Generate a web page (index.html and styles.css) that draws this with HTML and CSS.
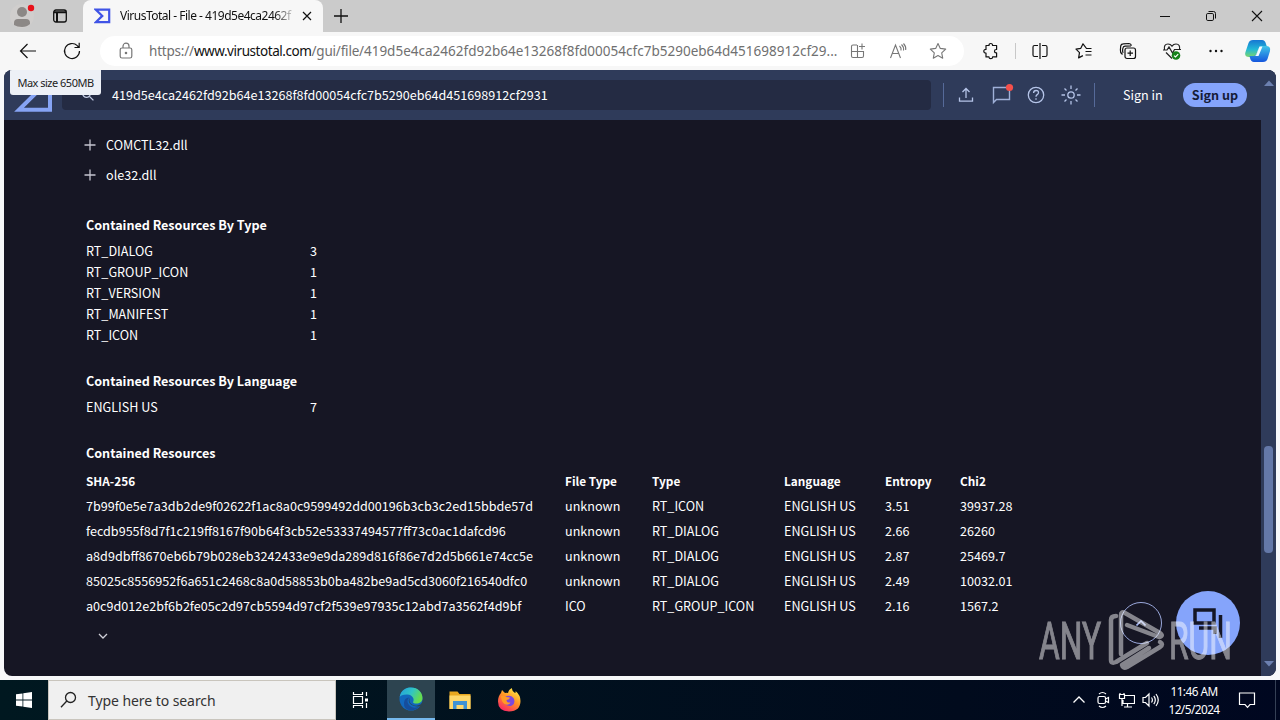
FILE: index.html
```html
<!DOCTYPE html>
<html lang="en">
<head>
<meta charset="utf-8">
<title>VirusTotal - File</title>
<link rel="stylesheet" href="styles.css">
</head>
<body>
<div class="desktop">
  <header class="tabstrip">
    <div class="strip-left">
      <svg class="profile" width="26" height="26" viewBox="0 0 26 26"><circle cx="13" cy="13" r="12" fill="#d0cecd"/><circle cx="13" cy="9" r="5" fill="#8c8886"/><path d="M5 22v-2q0-4 4-4h8q4 0 4 4v1q-3 3-8 3t-8-2z" fill="#8c8886"/><circle cx="22" cy="5" r="3.2" fill="#e8111a"/></svg>
      <svg class="panel-icon" width="16" height="16" viewBox="0 0 16 16" fill="none" stroke="#111" stroke-width="1.3"><rect x="1.7" y="2" width="12.6" height="12" rx="2.2"/><path d="M2 4.2h12M5 5v9" stroke-width="2"/></svg>
    </div>
    <div class="tab">
      <svg width="17" height="16" viewBox="0 0 17 16" fill="none" stroke="#4054e6" stroke-width="2.2"><path d="M1.8 1.6H15.2V14.2H1.8L8.3 7.9z"/></svg>
      <span class="tab-title">VirusTotal - File - 419d5e4ca2462f</span>
      <svg class="tab-close" width="12" height="12" viewBox="0 0 12 12" stroke="#111" stroke-width="1.2"><path d="M2 2l8 8M10 2l-8 8"/></svg>
    </div>
    <svg class="newtab" width="16" height="16" viewBox="0 0 16 16" stroke="#111" stroke-width="1.3"><path d="M1 8h14M8 1v14"/></svg>
    <div class="window-buttons">
      <svg width="12" height="12" viewBox="0 0 12 12" stroke="#111" fill="none"><path d="M1 6.5h10"/></svg>
      <svg width="12" height="12" viewBox="0 0 12 12" stroke="#111" fill="none"><rect x="1.5" y="3.5" width="7" height="7" rx="1.3"/><path d="M3.5 1.5h5q2 0 2 2v5"/></svg>
      <svg width="12" height="12" viewBox="0 0 12 12" stroke="#111" fill="none" stroke-width="1.1"><path d="M1 1l10 10M11 1L1 11"/></svg>
    </div>
  </header>

  <nav class="toolbar">
    <svg class="back" width="20" height="20" viewBox="0 0 20 20" fill="none" stroke="#111" stroke-width="1.2"><path d="M18 10H2.5M9.5 3L2.500 10l7 7"/></svg>
    <svg class="reload" width="20" height="20" viewBox="0 0 20 20" fill="none" stroke="#111" stroke-width="1.2"><path d="M17.500 10a7.500 7.500 0 1 1-2.200-5.300L17 6.300M17.200 1.800v4.700h-4.700"/></svg>
    <div class="address">
      <svg width="18" height="18" viewBox="0 0 18 18" fill="none" stroke="#777" stroke-width="1.2"><rect x="3.2" y="6" width="11.6" height="10" rx="1.8"/><path d="M6 6V4.200a3 3 0 0 1 6 0V6"/><circle cx="9" cy="11" r=".7" fill="#666"/></svg>
      <span class="url">https://<b>www.virustotal.com</b>/gui/file/<span class="url-hash">419d5e4ca2462fd92b64e13268f8fd00054cfc7b5290eb64d451698912cf29...</span></span>
      <div class="address-icons">
        <svg width="18" height="18" viewBox="0 0 18 18" fill="none" stroke="#777" stroke-width="1.1"><path d="M8 3H4q-1.500 0-1.500 1.500V14q0 1.500 1.500 1.500h9q1.500 0 1.500-1.500V9.500h-12M8.500 3v12.500M13 1.500v6M10 4.500h6"/></svg>
        <svg width="18" height="18" viewBox="0 0 18 18" fill="none" stroke="#777" stroke-width="1.1"><path d="M1.500 16L6.500 3l5 13M3.500 11.500h6M10.500 4q2 1.800 1.500 4.500M12.500 2.500q2.600 2.500 2 6M14.500 1.500q2.800 3 2.200 6.500"/></svg>
        <svg width="18" height="18" viewBox="0 0 18 18" fill="none" stroke="#777" stroke-width="1.1" stroke-linejoin="round"><path d="M9 1.500l2.300 4.900 5.400.7-4 3.700 1 5.400L9 13.600l-4.700 2.600 1-5.400-4-3.700 5.400-.7z"/></svg>
      </div>
    </div>
    <svg class="extensions" width="18" height="18" viewBox="0 0 18 18" fill="none" stroke="#111" stroke-width="1.2" stroke-linejoin="round"><path d="M4 3.500h3q0-2 1.800-2t1.800 2h4v4h-.5q-1.600 0-1.600 1.700t1.600 1.700h.5v4h-4q0 1.800-1.800 1.800T7 14.900H4V11Q1.800 11 1.800 9.200T4 7.400z"/></svg>
    <i class="toolbar-sep"></i>
    <div class="tools">
      <svg width="18" height="18" viewBox="0 0 18 18" fill="none" stroke="#111" stroke-width="1.2"><path d="M7 3.500H3.500q-1.500 0-1.500 1.500v8q0 1.500 1.500 1.500H7M11 3.500h3.500q1.500 0 1.500 1.500v8q0 1.500-1.500 1.500H11M9 1v16"/></svg>
      <svg width="18" height="18" viewBox="0 0 18 18" fill="none" stroke="#111" stroke-width="1.200" stroke-linejoin="round"><path d="M16.500 6.500h-5L8 1.800 5.800 6.300l-4.800.8 3.500 3.600-.9 5.200 4.300-2.300M10.500 9.500h6M10.500 13h6"/></svg>
      <svg width="18" height="18" viewBox="0 0 18 18" fill="none" stroke="#111" stroke-width="1.200"><rect x="6" y="6" width="10.500" height="10.500" rx="2"/><path d="M11.200 8.500v5.500M8.500 11.200H14M3.500 12.500Q1 10.500 1.400 8l.3-3.800Q2 2 4.200 1.900L10 1.500q2 0 2.500 2.200M4.200 10.800Q3.500 10 3.600 8l.2-1.500q.3-2.200 2.200-2.300l6-.4"/></svg>
      <svg width="18" height="18" viewBox="0 0 18 18" fill="none" stroke="#222" stroke-width="1.200"><path d="M1.500 8Q.500 2 5 2q2.500 0 4 2.200Q10.500 2 13 2q4.500 0 3.500 6M3 10.500l6 6M0 8h4l2-3 3.500 6 2-3.500H18"/><circle cx="13" cy="13.500" r="4.300" fill="#16821b" stroke="none"/><path d="M11 13.600l1.500 1.400 2.700-2.800" stroke="#fff"/></svg>
      <svg width="18" height="18" viewBox="0 0 18 18" fill="#111"><circle cx="3.500" cy="9" r="1.200"/><circle cx="9" cy="9" r="1.200"/><circle cx="14.500" cy="9" r="1.200"/></svg>
    </div>
    <svg class="copilot" width="26" height="24" viewBox="0 0 26 24"><defs><linearGradient id="cpa" x1="0" y1="0" x2="0" y2="1"><stop offset="0" stop-color="#1676d3"/><stop offset=".55" stop-color="#22b8d6"/><stop offset="1" stop-color="#7bd66c"/></linearGradient><linearGradient id="cpb" x1="0" y1="0" x2="0" y2="1"><stop offset="0" stop-color="#40c5e8"/><stop offset="1" stop-color="#1556dd"/></linearGradient></defs><path d="M8 1h9q3 0 4 4l1 3h-6q-2 0-3 3l-1.500 4Q10.500 18 8 18H4q-5 0-3.500-5L3.500 4Q4.500 1 8 1z" fill="url(#cpa)"/><path d="M18 23H9q-3 0-4-4l-.5-2H9q2 0 3-3l1.500-4Q14.500 7 17 7h4q5 0 4 5l-2.500 8q-1 3-4.500 3z" fill="url(#cpb)"/><path d="M14.500 7.500h3L13.500 17H10q1.300-.7 2-3z" fill="#f5fbff"/></svg>
  </nav>

  <main class="viewport">
    <div class="vt-header">
      <svg class="vt-logo" width="38" height="34" viewBox="0 0 38 34" fill="none" stroke="#86a4f5" stroke-width="4"><path d="M5 2h31v29.800H5L20 17z"/></svg>
      <div class="vt-search">
        <svg width="14" height="14" viewBox="0 0 14 14" fill="none" stroke="#c2cce4" stroke-width="1.300"><circle cx="5.500" cy="5.500" r="3.800"/><path d="M8.400 8.400l4 4"/></svg>
        <span>419d5e4ca2462fd92b64e13268f8fd00054cfc7b5290eb64d451698912cf2931</span>
      </div>
      <i class="vt-sep"></i>
      <div class="vt-icons">
        <svg width="20" height="20" viewBox="0 0 20 20" fill="none" stroke="#b5c4e8" stroke-width="1.300"><path d="M10 13V3.500M6.500 7L10 3.500 13.500 7M3.500 12.500v3.700h13v-3.700"/></svg>
        <svg width="20" height="20" viewBox="0 0 20 20" fill="none" stroke="#9fb0d8" stroke-width="1.400" overflow="visible"><path d="M2.500 17.500v-15h16v12h-13z"/><circle cx="18.500" cy="2.500" r="3.600" fill="#f5504b" stroke="none"/></svg>
        <svg width="20" height="20" viewBox="0 0 20 20" fill="none" stroke="#b5c4e8" stroke-width="1.300"><circle cx="10" cy="10" r="7.700"/><path d="M7.600 8q0-2.500 2.500-2.500T12.500 7.700q0 1-1.300 1.900T10 11.700M10 13.300v1.500"/></svg>
        <svg width="20" height="20" viewBox="0 0 20 20" fill="none" stroke="#b5c4e8" stroke-width="1.300"><circle cx="10" cy="10" r="3.200"/><path d="M10 .5V4M10 16v3.500M.5 10H4M16 10h3.500M3.500 3.500l2 2M14.500 14.500l2 2M3.500 16.500l2-2M14.500 5.500l2-2"/></svg>
      </div>
      <i class="vt-sep second"></i>
      <span class="signin">Sign in</span>
      <span class="signup">Sign up</span>
    </div>
    <div class="page-row">
      <div class="content">
        <div class="imports">
          <div class="import"><svg width="12" height="12" viewBox="0 0 12 12" stroke="#c5c5d0" stroke-width="1.300"><path d="M.500 6h11M6 .500v11"/></svg><span>COMCTL32.dll</span></div>
          <div class="import"><svg width="12" height="12" viewBox="0 0 12 12" stroke="#c5c5d0" stroke-width="1.300"><path d="M.500 6h11M6 .500v11"/></svg><span>ole32.dll</span></div>
        </div>
        <h2>Contained Resources By Type</h2>
        <dl class="counts">
          <dt>RT_DIALOG</dt><dd>3</dd>
          <dt>RT_GROUP_ICON</dt><dd>1</dd>
          <dt>RT_VERSION</dt><dd>1</dd>
          <dt>RT_MANIFEST</dt><dd>1</dd>
          <dt>RT_ICON</dt><dd>1</dd>
        </dl>
        <h2>Contained Resources By Language</h2>
        <dl class="counts"><dt>ENGLISH US</dt><dd>7</dd></dl>
        <h2>Contained Resources</h2>
        <div class="resources">
          <b>SHA-256</b><b>File Type</b><b>Type</b><b>Language</b><b>Entropy</b><b>Chi2</b>
          <span>7b99f0e5e7a3db2de9f02622f1ac8a0c9599492dd00196b3cb3c2ed15bbde57d</span><span>unknown</span><span>RT_ICON</span><span>ENGLISH US</span><span>3.51</span><span>39937.28</span>
          <span>fecdb955f8d7f1c219ff8167f90b64f3cb52e53337494577ff73c0ac1dafcd96</span><span>unknown</span><span>RT_DIALOG</span><span>ENGLISH US</span><span>2.66</span><span>26260</span>
          <span>a8d9dbff8670eb6b79b028eb3242433e9e9da289d816f86e7d2d5b661e74cc5e</span><span>unknown</span><span>RT_DIALOG</span><span>ENGLISH US</span><span>2.87</span><span>25469.7</span>
          <span>85025c8556952f6a651c2468c8a0d58853b0ba482be9ad5cd3060f216540dfc0</span><span>unknown</span><span>RT_DIALOG</span><span>ENGLISH US</span><span>2.49</span><span>10032.01</span>
          <span>a0c9d012e2bf6b2fe05c2d97cb5594d97cf2f539e97935c12abd7a3562f4d9bf</span><span>ICO</span><span>RT_GROUP_ICON</span><span>ENGLISH US</span><span>2.16</span><span>1567.2</span>
        </div>
        <svg class="more" width="10" height="8" viewBox="0 0 10 8" fill="none" stroke="#d0d0d8" stroke-width="1.300"><path d="M1 2l4 4 4-4"/></svg>
      </div>
    </div>
    <div class="scrollbar">
      <svg width="10" height="6" viewBox="0 0 10 6" fill="#6c80b0"><path d="M0 6l5-5.500L10 6z"/></svg>
      <i class="thumb"></i>
      <svg width="10" height="6" viewBox="0 0 10 6" fill="#6c80b0"><path d="M0 0l5 5.500L10 0z"/></svg>
    </div>
    <div class="tooltip">Max size 650MB</div>
    <div class="to-top"><svg width="10" height="6" viewBox="0 0 10 6" fill="none" stroke="#a9baf5" stroke-width="1.600"><path d="M.500 5.500L5 1l4.500 4.500"/></svg></div>
    <div class="chat"><svg width="32" height="30" viewBox="0 0 32 30" fill="none" stroke="#141626" stroke-width="3.500"><path d="M3 2h19v13H3zM28.500 7v23M7 20h16v6"/></svg></div>
    <svg class="watermark" width="200" height="64" viewBox="0 0 200 64">
      <g fill="#fff" stroke="#fff" stroke-width="1.1" font-family="Roboto, sans-serif" font-size="52.500"><text x="0" y="50.500" textLength="62" lengthAdjust="spacingAndGlyphs">ANY</text><text x="130" y="50.500" textLength="63" lengthAdjust="spacingAndGlyphs">RUN</text></g>
      <g fill="none" stroke="#fff" stroke-width="4.500" stroke-linejoin="round" stroke-linecap="round"><path d="M77 8q-5 0-5 4v40q0 4 5 2l31-19M82 46V7q0-4 4-2l35 20q4 3-1 4L88 17M121 34q4 2 0 5L88 59q-4 2-5-2l27-17"/></g>
    </svg>
  </main>

  <footer class="taskbar">
    <div class="start"><svg width="16" height="16" viewBox="0 0 16 16" fill="#fff"><path d="M0 2.300L6.500 1.400v6.200H0zM7.300 1.300L16 0v7.600H7.300zM0 8.400h6.500v6.200L0 13.700zM7.300 8.400H16V16l-8.700-1.300z"/></svg></div>
    <div class="search"><svg width="18" height="18" viewBox="0 0 18 18" fill="none" stroke="#222" stroke-width="1.300"><circle cx="10.500" cy="6.500" r="5"/><path d="M6.800 10L1 16.200"/></svg><span>Type here to search</span></div>
    <div class="task"><svg width="18" height="18" viewBox="0 0 18 18" fill="none" stroke="#fff" stroke-width="1.200"><path d="M2.500 1v2.500h9V1M2.500 17v-2.500h9V17M2.500 5.500h9v7h-9zM15.500 1v4M15.500 12v5"/><path d="M14 7.500h3v3h-3z" fill="#fff" stroke="none"/></svg></div>
    <div class="task active"><svg width="24" height="24" viewBox="0 0 24 24"><defs><linearGradient id="ea" x1="0" x2="1" y1="0" y2=".4"><stop offset="0" stop-color="#249fdd"/><stop offset=".55" stop-color="#30c4c5"/><stop offset="1" stop-color="#66dc4e"/></linearGradient></defs><circle cx="12" cy="12" r="11.500" fill="#1268bd"/><path d="M.7 10C2 3 6.500.5 12 .5c7 0 11.500 5 11.500 10.500 0 4-3 5.500-6 5.500-2.500 0-4-.8-3.300-1.800C15.500 12.500 14 8 8.500 7.500 4.500 7.200 1.500 8.500.7 10z" fill="url(#ea)"/><path d="M10 10.500q-3.500 4.500 1 8.500 4.500 3.500 10 0-4 4.800-10 4.200-6.500-1-6-7.500Q5.500 11 10 10.500z" fill="#164d9b"/><path d="M11 10.500q-2 5 2.500 7.200 4 2 7.800-.2l1.700-1.500 1 1-1.700 2.500-1.300-.5q-4.500 1.500-8.700-1.300t-1.300-7.200z" fill="#2d4450"/></svg></div>
    <div class="task"><svg width="24" height="22" viewBox="0 0 24 22"><path d="M1.500 2.500h8l2 2.500h11v15h-21z" fill="#e9a820"/><path d="M1.500 6.500h21V20h-21z" fill="#ffd86b"/><path d="M5 20v-8h14v8h-3.500v-4h-7v4z" fill="#3f93d3"/></svg></div>
    <div class="task"><svg width="24" height="24" viewBox="0 0 24 24"><defs><linearGradient id="fa" x1=".8" x2=".2" y1="0" y2="1"><stop offset="0" stop-color="#fff04a"/><stop offset=".45" stop-color="#ff9525"/><stop offset="1" stop-color="#fa1f68"/></linearGradient></defs><path d="M4 5l1-3 3 3q1.500-.7 3 0 .5-3.500 4-5-.5 3 3 5 1-.5.500-2Q23.500 7 23.500 13q0 10-11.500 10.500Q1 23 1 13.500 1 8 4 5z" fill="url(#fa)"/><path d="M8 9q5-3 8.500 1 2.500 5-1.500 7.500-4 1.500-7-1.500-1.500-2-.5-4z" fill="#7a48e0"/><path d="M4 8q3-1.500 5 1l4 .5q-.5 2-3.500 2.500 0 3 4 2.500-2 3.500-6 1.500Q4 13 4 8z" fill="#ff9b25"/></svg></div>
    <div class="tray">
      <svg width="16" height="18" viewBox="0 0 16 18" fill="none" stroke="#fff" stroke-width="1.300"><path d="M2.500 11.500L8 6l5.500 5.500"/></svg>
      <svg width="18" height="18" viewBox="0 0 18 18" fill="none" stroke="#fff" stroke-width="1.200"><rect x="5" y="5.500" width="7.500" height="7" rx="1.500"/><path d="M12.500 8l3-1.500v5l-3-1.500M6 3q3.500-3 7 0M6 15q3.500 3 7 0"/></svg>
      <svg width="18" height="18" viewBox="0 0 18 18" fill="none" stroke="#fff" stroke-width="1.200"><path d="M7 4.500h10.500v8H6V9M10.500 12.500v3M7 16h8M2.500 3.500h5v4h-5zM5 8v7M3 3.500V2M7 3.500V2"/></svg>
      <svg width="18" height="18" viewBox="0 0 18 18" fill="none" stroke="#fff" stroke-width="1.200"><path d="M2 6.500h2.500L8 3v12l-3.500-3.500H2zM10.500 6.500q1.800 2.500 0 5M12.800 4.800q3 4.200 0 8.400M15 3q4.500 6 0 12"/></svg>
      <div class="clock"><span>11:46 AM</span><span>12/5/2024</span></div>
      <svg class="notif" width="18" height="18" viewBox="0 0 18 18" fill="none" stroke="#fff" stroke-width="1.200"><path d="M1.500 2h15v11.500H12l-2.500 2.800L7 13.500H1.500z"/></svg>
    </div>
  </footer>
</div>
</body>
</html>
```
FILE: styles.css
```css
* { box-sizing: border-box; }
body { margin: 0; font-family: "Noto Sans", "Open Sans", sans-serif; }
svg { display: block; flex: none; }
.desktop { width: 1280px; height: 720px; overflow: hidden; display: flex; flex-direction: column; background: #f7f8fa; }

.tabstrip { height: 32px; flex: none; display: flex; align-items: center; background: #cbcbcb; }
.strip-left { width: 83px; display: flex; align-items: center; padding-left: 9px; gap: 17px; }
.tab { width: 240px; height: 32px; background: #f7f7f7; border-radius: 8px 8px 0 0; display: flex; align-items: center; padding-left: 11px; }
.tab-title { width: 175px; margin: -1px 0 0 9px; overflow: hidden; white-space: nowrap; font-size: 12px; letter-spacing: -0.5px; color: #111; -webkit-mask-image: linear-gradient(90deg, #000 88%, transparent 101%); mask-image: linear-gradient(90deg, #000 88%, transparent 101%); }
.tab-close { margin-left: 6px; }
.newtab { margin-left: 10px; }
.window-buttons { margin-left: auto; display: flex; gap: 34px; padding-right: 17px; }

.toolbar { height: 38px; flex: none; display: flex; align-items: center; background: #f7f7f7; }
.back { margin-left: 18px; }
.reload { margin-left: 24px; }
.address { width: 864px; height: 30px; margin-left: 18px; border-radius: 15px; background: #fff; display: flex; align-items: center; padding: 0 17px; }
.url { width: 690px; margin-left: 14px; white-space: nowrap; font-size: 13.5px; letter-spacing: -0.2px; color: #707070; }
.url b { font-weight: 400; color: #111; letter-spacing: -0.44px; }
.url-hash { letter-spacing: 0.01px; }
.address-icons { margin-left: auto; display: flex; gap: 22px; }
.extensions { margin-left: 18px; }
.toolbar-sep { width: 1px; height: 16px; margin-left: 15px; background: #c8c8c8; }
.tools { margin-left: 15px; display: flex; gap: 26px; }
.copilot { margin-left: 20px; }

.viewport { position: relative; width: 1272px; height: 606px; flex: none; margin-left: 4px; border-radius: 8px; overflow: hidden; background: #161624; color: #fff; font-family: "Noto Sans CJK SC", "Open Sans", sans-serif; font-size: 12.6px; }
.vt-header { height: 50px; background: #2f3b5a; display: flex; align-items: center; padding-left: 10px; }
.vt-search { width: 869px; height: 30px; margin-left: 10px; border-radius: 4px; background: #242b43; display: flex; align-items: center; padding-left: 19px; gap: 17px; }
.vt-search span { margin-top: -2px; }
.vt-sep { width: 1px; height: 24px; margin-left: 12px; background: #566a99; }
.vt-sep.second { margin-left: 13px; }
.vt-icons { display: flex; gap: 15px; margin-left: 12px; }
.signin { margin: -1px 0 0 28px; width: 60px; font-size: 12.6px; }
.signup { width: 64px; height: 24px; border-radius: 12px; background: #85a4fb; color: #151b38; font-size: 12.6px; font-weight: 700; line-height: 23px; text-align: center; }
.content { padding: 10px 0 0 82px; }
.imports { margin-left: -2px; margin-bottom: 23px; }
.import { height: 30px; display: flex; align-items: center; gap: 10px; }
.import span { margin-top: -2px; }
h2 { margin: 0 0 3px; height: 24px; line-height: 24px; font-size: 12.6px; font-weight: 700; letter-spacing: -0.02px; }
.counts { display: grid; grid-template-columns: 224px 30px; grid-auto-rows: 21px; line-height: 21px; margin: 0 0 24px; }
.counts dd { margin: 0; }
.resources { display: grid; grid-template-columns: 479px 87px 132px 101px 75px 100px; grid-auto-rows: 25px; line-height: 25px; white-space: nowrap; }
.resources b { font-size: 11.8px; }
.more { margin: 14px 0 0 12px; }

.scrollbar { position: absolute; right: 0; top: 0; width: 15px; height: 606px; padding: 10px 0 9px; background: #2f3b5a; display: flex; flex-direction: column; align-items: center; justify-content: space-between; }
.thumb { width: 9px; height: 107px; margin-top: 252px; border-radius: 4px; background: #6478a8; }
.tooltip { position: absolute; left: 6px; top: 0; width: 91px; height: 25px; border-radius: 0 0 3px 3px; background: #edf0f6; color: #222; font: 11px/26px "Noto Sans", sans-serif; text-align: center; white-space: nowrap; letter-spacing: -0.5px; }
.to-top { position: absolute; left: 1116px; top: 532px; width: 42px; height: 42px; border: 1px solid #9aa8dc; border-radius: 50%; display: flex; align-items: center; justify-content: center; }
.chat { position: absolute; left: 1172px; top: 521px; width: 64px; height: 64px; border-radius: 50%; background: #85a4fb; display: flex; align-items: center; justify-content: center; }
.watermark { position: absolute; left: 1035px; top: 538px; opacity: 0.48; }

.taskbar { margin-top: 4px; height: 40px; flex: none; display: flex; align-items: center; background: linear-gradient(90deg, #001820, #010b1d 75%, #000720); color: #fff; }
.start { width: 48px; height: 40px; padding: 12px 0 0 16px; }
.search { width: 288px; height: 40px; background: #f0f0f0; border: 1px solid #c9c5bd; color: #333; font-size: 14px; letter-spacing: -0.07px; display: flex; align-items: center; padding-left: 11px; gap: 10px; }
.task { width: 49px; height: 40px; display: flex; align-items: center; justify-content: center; }
.start + .search + .task { width: 51px; padding-right: 3px; }
.task.active { width: 48px; background: #2d4450; border-bottom: 2px solid #76b9ed; }
.tray { margin-left: auto; display: flex; align-items: center; padding-right: 4px; border-right: 1px solid #354055; margin-right: 4px; height: 40px; gap: 6px; }
.clock { width: 54px; margin-left: 2px; display: flex; flex-direction: column; text-align: center; font-size: 11.8px; line-height: 18px; letter-spacing: -0.55px; align-items: center; white-space: nowrap; }
.notif { margin: 0 15px 0 11px; }
```
